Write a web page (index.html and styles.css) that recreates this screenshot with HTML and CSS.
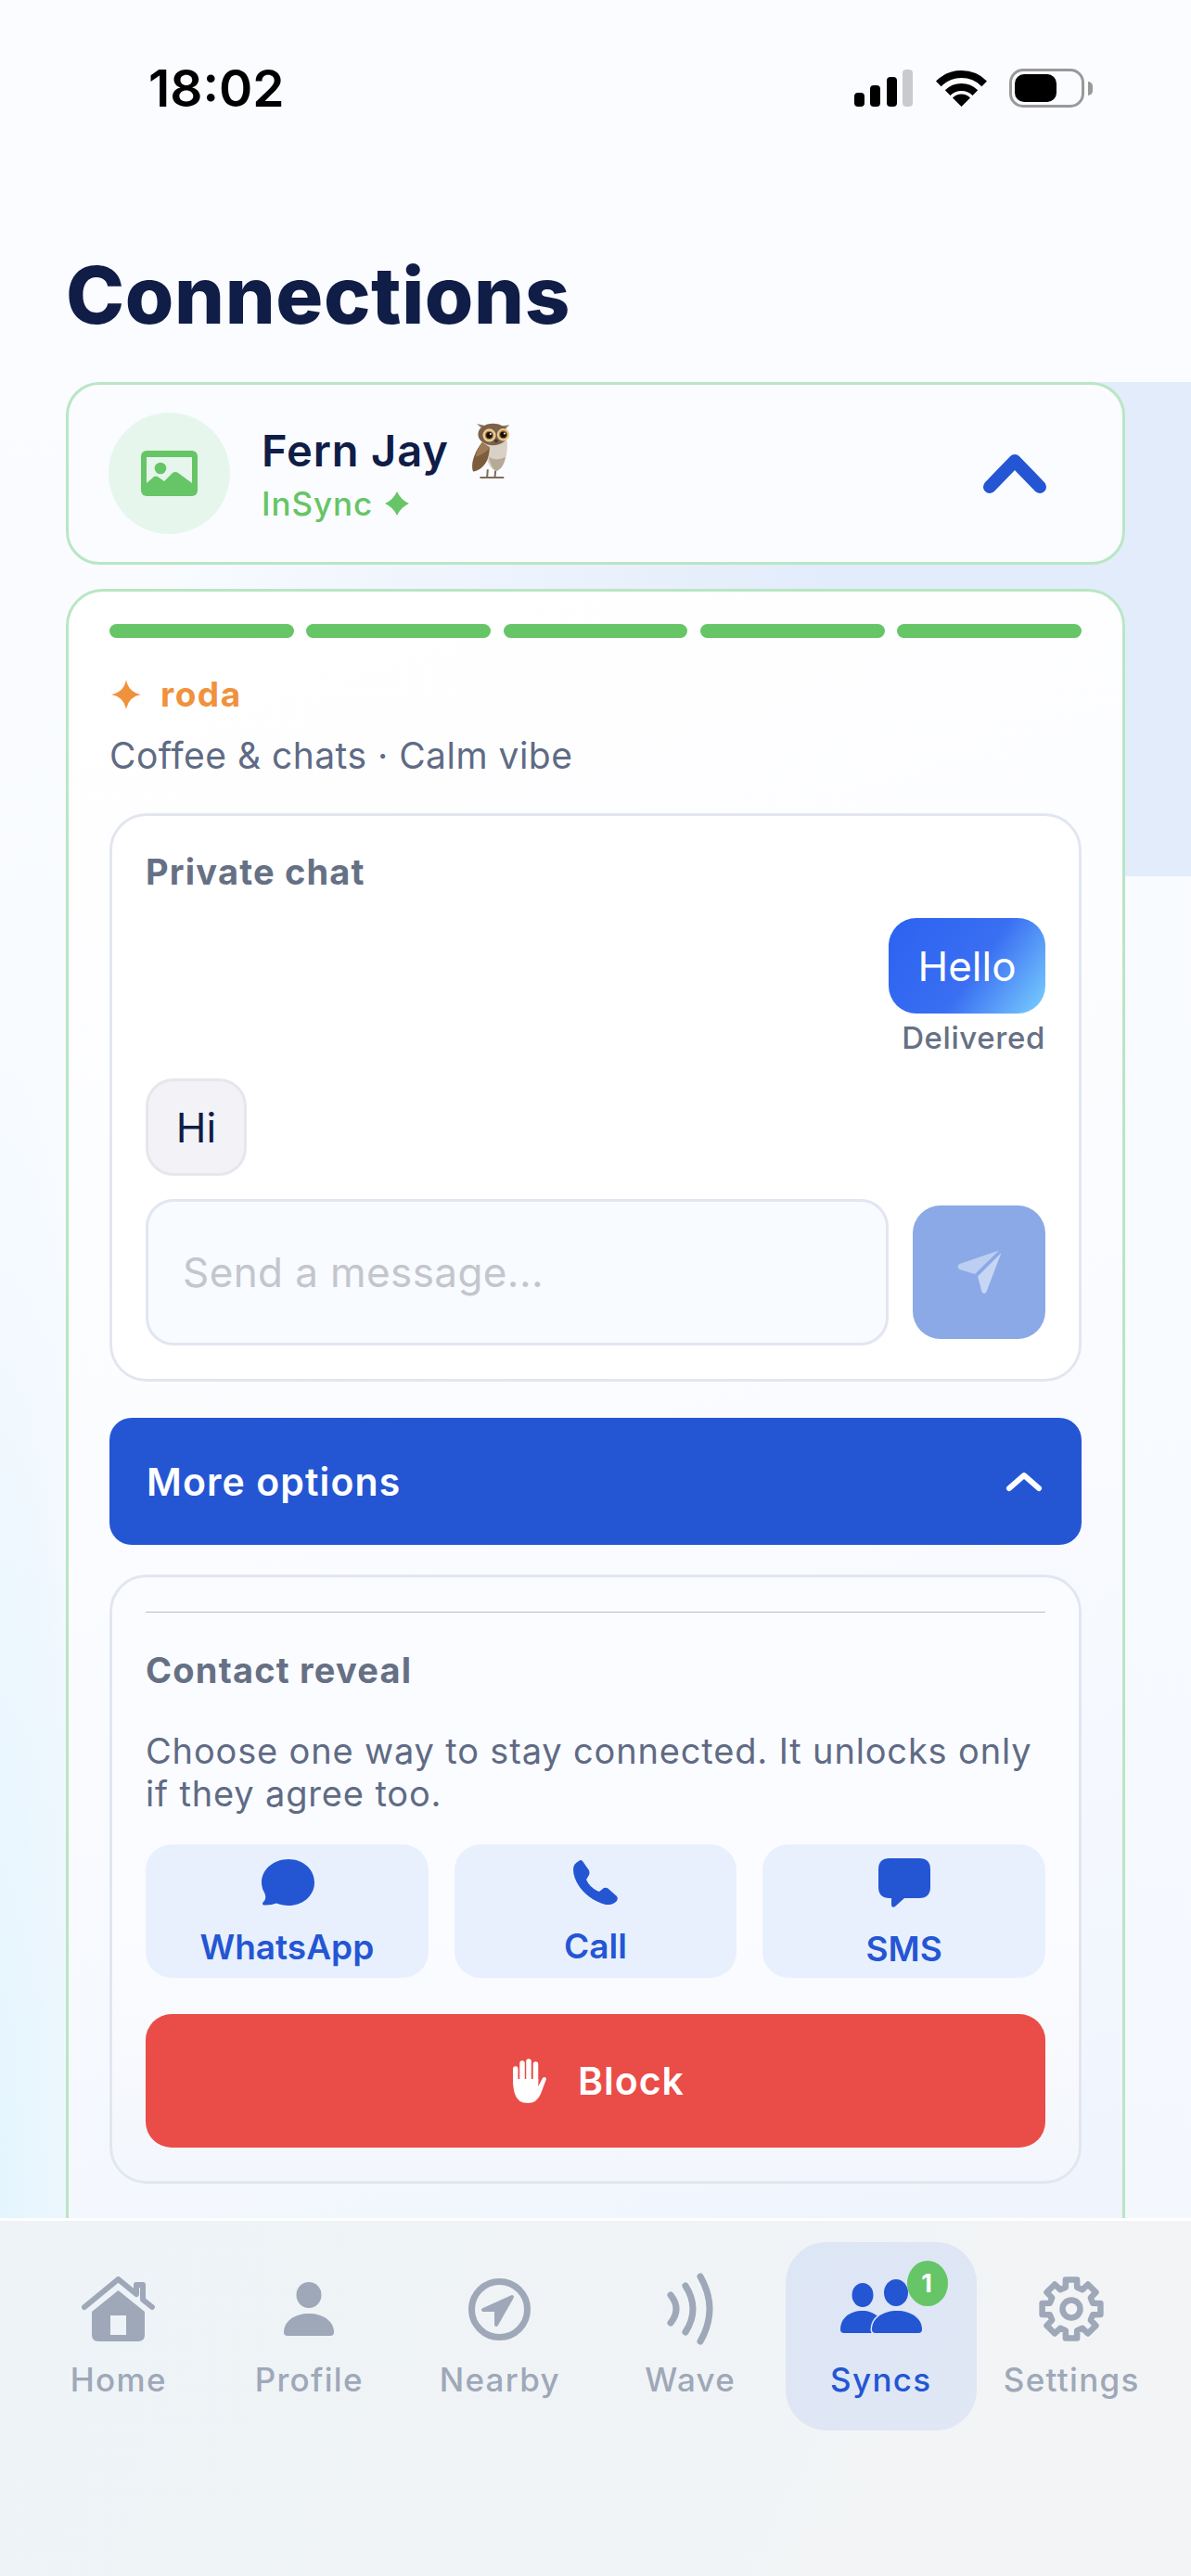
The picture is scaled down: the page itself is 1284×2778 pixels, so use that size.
FILE: index.html
```html
<!DOCTYPE html>
<html lang="en">
<head>
    <meta charset="UTF-8">
    <meta name="viewport" content="width=device-width, initial-scale=1.0">
    <title>Connections</title>
    <link rel="stylesheet" href="styles.css">
</head>
<body>
    <div class="app">
        <header class="top">
            <div class="status-bar">
                <span class="clock">18:02</span>
                <div class="status-icons">
                    <div class="signal">
                        <i class="bar bar-1"></i><i class="bar bar-2"></i><i class="bar bar-3"></i><i class="bar bar-4"></i>
                    </div>
                    <svg class="wifi" viewBox="0 0 55 40">
                        <path d="M2.8 15.3A35 35 0 0 1 52.2 15.3M12.65 25.15A21 21 0 0 1 42.35 25.15" fill="none" stroke="#000" stroke-width="8"/>
                        <path d="M27.5 40L18 30.5A13.4 13.4 0 0 1 37 30.5Z" fill="#000"/>
                    </svg>
                    <div class="battery"><i class="battery-level"></i></div>
                    <i class="battery-nub"></i>
                </div>
            </div>
            <h1 class="page-title">Connections</h1>
        </header>

        <main class="content">
            <div class="glow"></div>

            <section class="person-card">
                <div class="avatar">
                    <svg class="avatar-icon" viewBox="0 0 61 49">
                        <rect width="61" height="49" rx="6" fill="#66c566"/>
                        <path d="M6 7H55V35L40 24Q37 22 34 24L25 33L18 28Q16 27 14 28L6 35Z" fill="#e6f6ec"/>
                        <circle cx="21" cy="19" r="6.3" fill="#66c566"/>
                    </svg>
                </div>
                <div class="person-text">
                    <div class="person-name">
                        <span>Fern Jay</span>
                        <svg class="owl" viewBox="30 15 122 182">
                            <path d="M80 165L78 190M105 168L103 190M55 191H132" fill="none" stroke="#7f6d5a" stroke-width="6"/>
                            <path d="M70 80C88 70 125 70 142 72C146 120 132 165 108 170C84 165 72 130 70 80Z" fill="#d9d1c6"/>
                            <path d="M84 125C88 150 96 165 108 170C122 166 132 150 137 125C118 135 100 135 84 125Z" fill="#b7a998"/>
                            <path d="M62 78C36 110 24 150 33 172C60 166 84 146 86 94Z" fill="#7c5c3a"/>
                            <path d="M62 78C48 96 42 112 42 124C60 118 78 108 86 94Z" fill="#9c7b56"/>
                            <path d="M45 18L84 27L76 46ZM150 22L112 27L124 46Z" fill="#8d7860"/>
                            <ellipse cx="97" cy="52" rx="48" ry="35" fill="#7c6249"/>
                            <circle cx="85" cy="55" r="21" fill="#e5cd9c"/>
                            <circle cx="130" cy="53" r="20" fill="#e5cd9c"/>
                            <circle cx="85" cy="55" r="14" fill="#b5752a"/>
                            <circle cx="130" cy="53" r="14" fill="#b5752a"/>
                            <circle cx="85" cy="55" r="10" fill="#14100c"/>
                            <circle cx="130" cy="53" r="10" fill="#14100c"/>
                            <circle cx="89" cy="51" r="3" fill="#fff"/>
                            <circle cx="134" cy="49" r="3" fill="#fff"/>
                            <ellipse cx="107" cy="73" rx="7" ry="6" fill="#4a3c30"/>
                        </svg>
                    </div>
                    <div class="person-status">
                        <span>InSync</span>
                        <svg class="status-star" viewBox="0 0 26 26"><path d="M13 0Q17 9 26 13Q17 17 13 26Q9 17 0 13Q9 9 13 0Z" fill="#66c566"/></svg>
                    </div>
                </div>
                <svg class="collapse" viewBox="0 0 68 42"><path d="M7 35L34 7L61 35" fill="none" stroke="#2456d4" stroke-width="14" stroke-linecap="round" stroke-linejoin="round"/></svg>
            </section>

            <section class="detail-card">
                <div class="progress">
                    <i></i><i></i><i></i><i></i><i></i>
                </div>
                <div class="mood">
                    <svg class="mood-star" viewBox="0 0 32 32"><path d="M16 0Q18.500 13.500 32 16Q18.500 18.500 16 32Q13.500 18.500 0 16Q13.500 13.500 16 0Z" fill="#f0923c"/></svg>
                    <span>roda</span>
                </div>
                <p class="tagline">Coffee &amp; chats · Calm vibe</p>

                <div class="panel chat-panel">
                    <div class="panel-title">Private chat</div>
                    <div class="bubble bubble-out">Hello</div>
                    <div class="delivered">Delivered</div>
                    <div class="bubble bubble-in">Hi</div>
                    <div class="composer">
                        <div class="message-input">Send a message...</div>
                        <button class="send-btn">
                            <svg class="send-icon" viewBox="0 0 48 48">
                                <path d="M45 0.500L2.500 15Q-1.500 18 2.500 21L19 26Z" fill="#bccff2"/>
                                <path d="M47.500 3L22 28.500L26.500 45Q29 49 31.500 45Z" fill="#c6d6f4"/>
                            </svg>
                        </button>
                    </div>
                </div>

                <button class="more-btn">
                    <span>More options</span>
                    <svg class="more-chevron" viewBox="0 0 40 22"><path d="M4 18L20 4L36 18" fill="none" stroke="#fff" stroke-width="6" stroke-linecap="round" stroke-linejoin="round"/></svg>
                </button>

                <div class="panel reveal-panel">
                    <div class="divider"></div>
                    <div class="panel-title reveal-title">Contact reveal</div>
                    <p class="reveal-text">Choose one way to stay connected. It unlocks only if they agree too.</p>
                    <div class="reveal-options">
                        <button class="reveal-btn">
                            <svg class="icon-whatsapp" viewBox="0 0 59 50">
                                <path d="M31 0C47 0 59 11 59 25C59 39 47 50 31 50C26 50 22 49 18 47.500Q12 50 4 49.500Q2 48 4 46Q8 42 5 36Q2 31 2 25C2 11 15 0 31 0Z" fill="#2456d4"/>
                            </svg>
                            <span>WhatsApp</span>
                        </button>
                        <button class="reveal-btn">
                            <svg class="icon-call" viewBox="0 0 48 48">
                                <path d="M6 1Q8-1 10 1L17 11Q18 14 17 16L14 21Q18 30 28 34L33 30Q36 29 38 31L47 39Q49 42 46 45Q41 49 35 48C15 43 0 25 0 10Q0 4 6 1Z" fill="#2456d4"/>
                            </svg>
                            <span>Call</span>
                        </button>
                        <button class="reveal-btn">
                            <svg class="icon-sms" viewBox="0 0 56 53">
                                <path d="M12 0H44Q56 0 56 12V31Q56 43 44 43H28L18 52Q14 54 14 50V43H12Q0 43 0 31V12Q0 0 12 0Z" fill="#2456d4"/>
                            </svg>
                            <span>SMS</span>
                        </button>
                    </div>
                    <button class="block-btn">
                        <svg class="icon-hand" viewBox="0 0 36 48">
                            <path d="M2.700 11V26M10 5V24M17 3V24M24.500 6V24" fill="none" stroke="#fff" stroke-width="5.500" stroke-linecap="round"/>
                            <path d="M0 22H27.300V30L32 21Q35 18.500 36 22L30 38Q26 48 16 48Q5 48 2 38Q0 32 0 22Z" fill="#fff"/>
                        </svg>
                        <span>Block</span>
                    </button>
                </div>
            </section>
        </main>

        <nav class="tabbar">
            <a class="tab">
                <div class="tab-icon">
                    <svg class="icon-home" viewBox="0 0 79 70">
                        <path d="M3 33L39.500 3L59 19V9H66V25L76 33" fill="none" stroke="#9ea8b8" stroke-width="6" stroke-linecap="round" stroke-linejoin="round"/>
                        <path fill-rule="evenodd" d="M39.500 15L68 38V63Q68 70 61 70H18Q11 70 11 63V38ZM31 42V63H48V42Z" fill="#9ea8b8"/>
                    </svg>
                </div>
                <span>Home</span>
            </a>
            <a class="tab">
                <div class="tab-icon">
                    <svg class="icon-profile" viewBox="0 0 54 58">
                        <ellipse cx="27" cy="14" rx="13.500" ry="14" fill="#9ea8b8"/>
                        <path d="M0 54C0 42 12 34 27 34C42 34 54 42 54 54Q54 58 50 58H4Q0 58 0 54Z" fill="#9ea8b8"/>
                    </svg>
                </div>
                <span>Profile</span>
            </a>
            <a class="tab">
                <div class="tab-icon">
                    <svg class="icon-nearby" viewBox="0 0 67 67">
                        <circle cx="33.500" cy="33.500" r="30" fill="none" stroke="#9ea8b8" stroke-width="7"/>
                        <path d="M47 20L16 34H30V50Z" fill="#9ea8b8" stroke="#9ea8b8" stroke-width="4" stroke-linejoin="round"/>
                    </svg>
                </div>
                <span>Nearby</span>
            </a>
            <a class="tab">
                <div class="tab-icon">
                    <svg class="icon-wave" viewBox="0 0 51 80">
                        <path d="M4 25Q16 40 4 55M20 15Q36 40 20 65M36 5Q56 40 36 75" fill="none" stroke="#9ea8b8" stroke-width="7" stroke-linecap="round"/>
                    </svg>
                </div>
                <span>Wave</span>
            </a>
            <a class="tab tab-active">
                <div class="tab-icon">
                    <svg class="icon-syncs" viewBox="0 0 88 59">
                        <ellipse cx="24" cy="17" rx="11.500" ry="13" fill="#2456d4"/>
                        <ellipse cx="60" cy="14.500" rx="13" ry="14.500" fill="#2456d4"/>
                        <path d="M0 54C0 42 10 34 24 34C36 34 46 42 46 54Q46 58 42 58H4Q0 58 0 54Z" fill="#2456d4"/>
                        <path d="M34 54C34 42 46 34 61 34C76 34 88 42 88 54Q88 58 84 58H38Q34 58 34 54Z" fill="#2456d4" stroke="#dde6f5" stroke-width="3" paint-order="stroke"/>
                    </svg>
                    <span class="badge">1</span>
                </div>
                <span>Syncs</span>
            </a>
            <a class="tab">
                <div class="tab-icon">
                    <svg class="icon-gear" viewBox="-36 -36 72 72">
                        <path d="M-6.200-23.200L-6.100-31.400L6.100-31.400L6.200-23.200L12-20.800L17.900-26.500L26.500-17.900L20.800-12L23.200-6.200L31.400-6.100L31.400 6.100L23.200 6.200L20.800 12L26.500 17.900L17.900 26.500L12 20.800L6.200 23.200L6.100 31.400L-6.100 31.400L-6.200 23.200L-12 20.800L-17.900 26.500L-26.500 17.900L-20.800 12L-23.200 6.200L-31.400 6.100L-31.400-6.100L-23.200-6.200L-20.800-12L-26.500-17.900L-17.900-26.500L-12-20.800Z" fill="none" stroke="#9ea8b8" stroke-width="6.500" stroke-linejoin="round"/>
                        <circle r="9.500" fill="none" stroke="#9ea8b8" stroke-width="6.500"/>
                    </svg>
                </div>
                <span>Settings</span>
            </a>
        </nav>
    </div>
</body>
</html>
```

FILE: styles.css
```css
* {
    box-sizing: border-box;
    margin: 0;
    padding: 0;
}

body {
    font-family: 'Inter', sans-serif;
    color: #0f1d47;
}

button {
    font-family: inherit;
    border: none;
}

svg {
    display: block;
}

.app {
    width: 1284px;
    height: 2778px;
    display: flex;
    flex-direction: column;
    overflow: hidden;
}

/* header */

.top {
    height: 412px;
    flex-shrink: 0;
    background-color: #fbfcff;
}

.status-bar {
    height: 190px;
    display: flex;
    justify-content: space-between;
    align-items: center;
    padding: 0 106px 0 160px;
}

.clock {
    font-size: 55px;
    font-weight: 600;
    color: #000;
}

.status-icons {
    display: flex;
    align-items: center;
}

.signal {
    display: flex;
    align-items: flex-end;
    gap: 6.5px;
    height: 40px;
}

.bar {
    width: 11px;
    background-color: #000;
    border-radius: 4px;
}

.bar-1 { height: 15px; }
.bar-2 { height: 23px; }
.bar-3 { height: 32px; }
.bar-4 { height: 40px; background-color: #c9cacd; }

.wifi {
    width: 55px;
    height: 40px;
    margin-left: 25px;
}

.battery {
    width: 81px;
    height: 42px;
    margin-left: 24px;
    border: 3px solid #999;
    border-radius: 15px;
    padding: 3px;
}

.battery-level {
    display: block;
    width: 45px;
    height: 30px;
    background-color: #000;
    border-radius: 10px;
}

.battery-nub {
    width: 5px;
    height: 15px;
    margin-left: 4px;
    background-color: #999;
    border-radius: 0 8px 8px 0;
}

.page-title {
    padding-left: 71px;
    margin-top: 79px;
    font-size: 85px;
    line-height: 100px;
    font-weight: 800;
    letter-spacing: 0.6px;
}

/* scroll area */

.content {
    flex: 1;
    min-height: 0;
    position: relative;
    overflow: hidden;
    padding: 0 71px;
    background: radial-gradient(ellipse 130px 1300px at 0 100%, #e4f5fe 0, rgba(228, 245, 254, 0) 100%),
        linear-gradient(180deg, #fafcff 0, #f7faff 60%, #f4f7fd 100%);
}

.content > section {
    position: relative;
}

.glow {
    position: absolute;
    top: 0;
    left: 141px;
    right: 0;
    height: 533px;
    background: linear-gradient(90deg, rgba(226, 235, 251, 0) 0%, #e3ecfb 65%);
}

.person-card {
    height: 197px;
    display: flex;
    align-items: center;
    padding: 0 82px 0 43px;
    background-color: #fbfcff;
    border: 3px solid #b9e6c4;
    border-radius: 36px;
}

.avatar {
    width: 131px;
    height: 131px;
    flex-shrink: 0;
    display: flex;
    align-items: center;
    justify-content: center;
    background-color: #e6f6ec;
    border-radius: 50%;
}

.avatar-icon {
    width: 61px;
    height: 49px;
}

.person-text {
    flex: 1;
    margin-left: 34px;
}

.person-name {
    display: flex;
    align-items: center;
    gap: 25px;
    font-size: 47px;
    line-height: 60px;
    font-weight: 600;
    letter-spacing: 0.9px;
}

.owl {
    width: 41px;
    height: 61px;
}

.person-status {
    display: flex;
    align-items: center;
    gap: 13px;
    margin-top: 3px;
    font-size: 35px;
    line-height: 46px;
    font-weight: 500;
    letter-spacing: 0.9px;
    color: #66c566;
}

.status-star {
    width: 26px;
    height: 26px;
}

.collapse {
    width: 68px;
    height: 42px;
}

.detail-card {
    height: 1800px;
    margin-top: 26px;
    padding: 35px 44px;
    background: linear-gradient(160deg, #ffffff 0, #fbfcff 50%, #eff4fd 100%);
    border: 3px solid #b9e6c4;
    border-radius: 40px;
}

.progress {
    display: flex;
    gap: 13.5px;
}

.progress i {
    flex: 1;
    height: 15px;
    background-color: #66c566;
    border-radius: 8px;
}

.mood {
    display: flex;
    align-items: center;
    gap: 21px;
    margin-top: 39px;
    padding-left: 2px;
    font-size: 37px;
    line-height: 44px;
    font-weight: 700;
    letter-spacing: 1.5px;
    color: #f0923c;
}

.mood-star {
    width: 32px;
    height: 32px;
}

.tagline {
    margin-top: 20px;
    font-size: 39px;
    line-height: 48px;
    letter-spacing: 0.48px;
    color: #5f6b85;
}

.panel {
    padding: 0 36px;
    border: 3px solid #e2e6f0;
    border-radius: 40px;
}

.panel-title {
    font-size: 38px;
    line-height: 46px;
    font-weight: 700;
    letter-spacing: 1.2px;
    color: #667085;
}

.chat-panel {
    margin-top: 38px;
    padding-top: 37px;
    padding-bottom: 36px;
    background-color: #fff;
}

.bubble {
    font-size: 44px;
    display: flex;
    align-items: center;
    justify-content: center;
    border-radius: 30px;
}

.bubble-out {
    width: 169px;
    height: 103px;
    margin: 27px 0 0 auto;
    color: #fff;
    background: linear-gradient(125deg, #2b62f0 0, #3a6ff2 55%, #7ad0ff 100%);
}

.delivered {
    margin-top: 6px;
    text-align: right;
    font-size: 33px;
    line-height: 40px;
    font-weight: 500;
    letter-spacing: 0.6px;
    color: #667085;
}

.bubble-in {
    width: 109px;
    height: 105px;
    margin-top: 24px;
    background-color: #f2f2f7;
    border: 3px solid #e6e6ec;
}

.composer {
    display: flex;
    align-items: center;
    gap: 26px;
    margin-top: 25px;
}

.message-input {
    flex: 1;
    height: 158px;
    display: flex;
    align-items: center;
    padding-left: 37px;
    font-size: 44px;
    letter-spacing: 0.4px;
    color: #c4c6cc;
    background-color: #f8fbff;
    border: 3px solid #e2e6f0;
    border-radius: 30px;
}

.send-btn {
    width: 143px;
    height: 144px;
    display: flex;
    align-items: center;
    justify-content: center;
    background-color: #8ba9e6;
    border-radius: 30px;
}

.send-icon {
    width: 48px;
    height: 48px;
}

.more-btn {
    width: 100%;
    height: 137px;
    margin-top: 39px;
    display: flex;
    align-items: center;
    justify-content: space-between;
    padding: 0 42px 0 40px;
    font-size: 41px;
    font-weight: 600;
    letter-spacing: 1.1px;
    color: #fff;
    background-color: #2456d4;
    border-radius: 24px;
}

.more-chevron {
    width: 40px;
    height: 22px;
}

.reveal-panel {
    margin-top: 32px;
    padding-top: 37px;
    padding-bottom: 36px;
    background: linear-gradient(180deg, #fbfcff 0, #fbfcff 60%, #f3f6fc 100%);
}

.divider {
    height: 1px;
    background-color: #b8bcc8;
}

.reveal-title {
    margin-top: 39px;
}

.reveal-text {
    margin-top: 41px;
    font-size: 38px;
    line-height: 46px;
    letter-spacing: 0.84px;
    color: #5f6b85;
}

.reveal-options {
    display: flex;
    gap: 28px;
    margin-top: 32px;
}

.reveal-btn {
    flex: 1;
    height: 144px;
    display: flex;
    flex-direction: column;
    align-items: center;
    justify-content: center;
    gap: 28px;
    font-size: 37px;
    line-height: 34px;
    font-weight: 600;
    color: #2456d4;
    background-color: #e9f0fd;
    border-radius: 28px;
}

.icon-whatsapp { width: 59px; height: 50px; }
.icon-call { width: 48px; height: 48px; }
.icon-sms { width: 56px; height: 53px; }

.block-btn {
    width: 100%;
    height: 144px;
    margin-top: 39px;
    display: flex;
    align-items: center;
    justify-content: center;
    gap: 34px;
    padding-left: 7px;
    font-size: 41px;
    font-weight: 600;
    letter-spacing: 1px;
    color: #fff;
    background-color: #ea4c48;
    border-radius: 28px;
}

.icon-hand {
    width: 36px;
    height: 48px;
}

/* bottom tabs */

.tabbar {
    height: 386px;
    flex-shrink: 0;
    position: relative;
    display: grid;
    grid-template-columns: repeat(6, 1fr);
    align-items: start;
    padding: 23px 26px 0 25px;
    background: linear-gradient(120deg, #edf3f7 0, #f3f4f5 100%);
    border-top: 3px solid #fff;
}

.tab {
    height: 203px;
    display: flex;
    flex-direction: column;
    align-items: center;
    padding-top: 27px;
    font-size: 35px;
    line-height: 44px;
    font-weight: 500;
    letter-spacing: 1.3px;
    color: #9ea8b8;
    border-radius: 44px;
}

.tab-active {
    color: #2456d4;
    background: linear-gradient(135deg, #dde6f5 0, #e0e7f5 100%);
}

.tab-icon {
    position: relative;
    height: 90px;
    margin-bottom: 9px;
    display: flex;
    align-items: center;
    justify-content: center;
}

.icon-home { width: 79px; height: 70px; }
.icon-profile { width: 54px; height: 58px; }
.icon-nearby { width: 67px; height: 67px; }
.icon-wave { width: 51px; height: 80px; }
.icon-syncs { width: 88px; height: 59px; margin-top: -6px; }
.icon-gear { width: 72px; height: 72px; }

.badge {
    position: absolute;
    top: -7px;
    right: -28px;
    width: 44px;
    height: 49px;
    display: flex;
    align-items: center;
    justify-content: center;
    font-size: 27px;
    font-weight: 700;
    color: #fff;
    background-color: #66c566;
    border-radius: 50%;
}
```
